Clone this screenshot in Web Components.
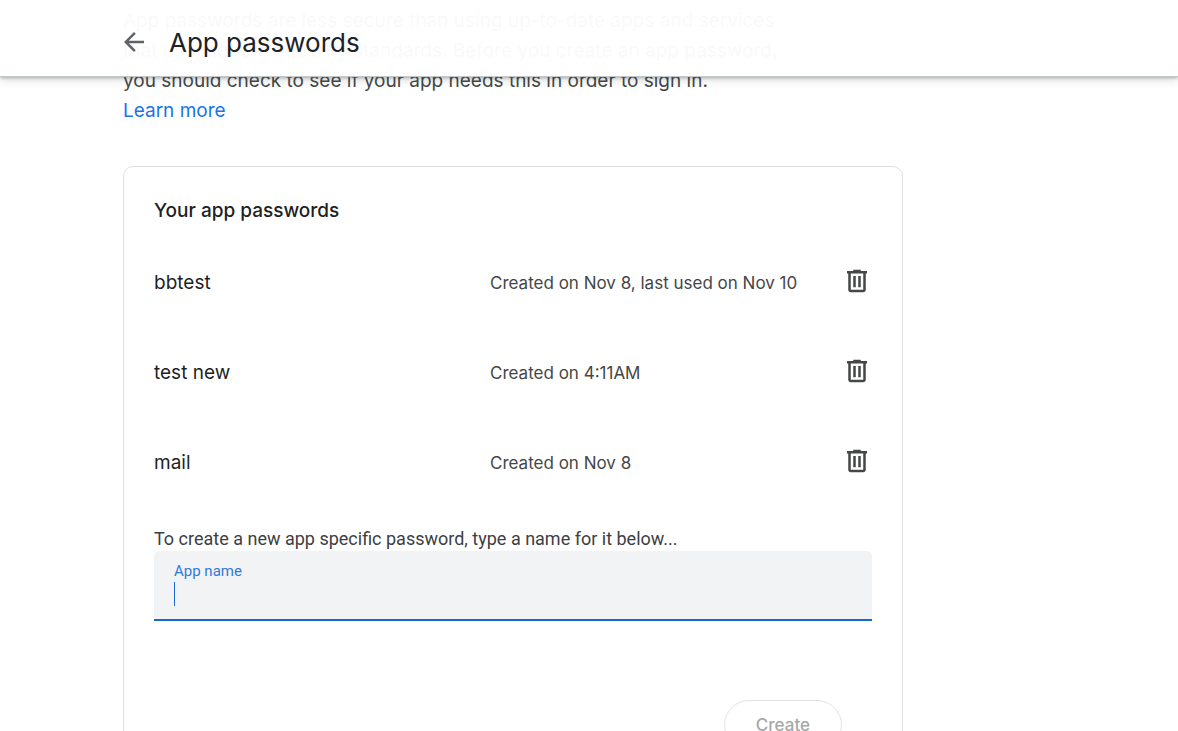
<!DOCTYPE html>
<html lang="en">
<head>
<meta charset="utf-8">
<meta name="viewport" content="width=device-width, initial-scale=1">
<title>App passwords</title>
<style>
html { scrollbar-width: none; }
body {
  margin: 0;
  background: #fff;
  color: #1f1f1f;
  font: 19px/30px "Google Sans Text", Inter, "Liberation Sans", sans-serif;
}
</style>
</head>
<body>
<app-passwords-page>
  <page-bar slot="bar">App passwords</page-bar>
  <intro-text>App passwords are less secure than using up-to-date apps and services<br>that use modern security standards. Before you create an app password,<br>you should check to see if your app needs this in order to sign in.<br></intro-text>
  <password-card>
    <span slot="heading">Your app passwords</span>
    <password-row>bbtest<span slot="meta">Created on Nov 8, last used on Nov 10</span></password-row>
    <password-row>test new<span slot="meta">Created on 4:11AM</span></password-row>
    <password-row>mail<span slot="meta">Created on Nov 8</span></password-row>
    <create-form slot="form"></create-form>
  </password-card>
</app-passwords-page>
<script>
const define = (name, html) => {
  const template = document.createElement('template');
  template.innerHTML = html;
  customElements.define(name, class extends HTMLElement {
    constructor() {
      super();
      this.attachShadow({ mode: 'open' }).append(template.content.cloneNode(true));
    }
  });
};

define('app-passwords-page', `
<style>
:host { display: block; }
main { box-sizing: border-box; max-width: 1026px; padding: 6px 123px 60px; }
@media (max-width: 800px) { main { padding-inline: 20px; } }
</style>
<slot name="bar"></slot>
<main><slot></slot></main>`);

define('page-bar', `
<style>
:host { display: block; position: sticky; top: 0; height: 0; z-index: 2; }
header {
  display: flex; align-items: center; gap: 20px; box-sizing: border-box;
  height: 77px; padding: 8px 119px 0; background: rgba(255,255,255,.97);
  border-bottom: 1px solid #c4c7c9;
  box-shadow: 0 1px 3px rgba(60,64,67,.35), 0 4px 8px rgba(60,64,67,.15);
}
button { display: flex; padding: 0; border: 0; background: none; color: #5f6368; }
svg { width: 30px; height: 30px; fill: currentColor; }
h1 { margin: 0; padding-top: 2px; font-size: 26px; line-height: 36px; font-weight: 400; color: #202124; }
@media (max-width: 800px) { header { padding-inline: 16px; } }
</style>
<header>
  <button type="button" aria-label="Back"><svg viewBox="0 0 24 24" aria-hidden="true"><path d="M20 11H7.83l5.59-5.59L12 4l-8 8 8 8 1.41-1.41L7.83 13H20v-2z"/></svg></button>
  <h1><slot></slot></h1>
</header>`);

define('intro-text', `
<style>
:host { display: block; color: #444746; }
p { margin: 0; }
a { color: #1a73e8; text-decoration: none; }
</style>
<p><slot></slot><a href="#">Learn more</a></p>`);

define('password-card', `
<style>
:host { display: block; margin-top: 40px; }
section { border: 1px solid #e0e0e0; border-radius: 10px; padding: 29px 30px 30px; }
h2 { margin: 0 0 11px; font-size: 19px; line-height: 30px; font-weight: 500; }
</style>
<section>
  <h2><slot name="heading"></slot></h2>
  <slot></slot>
  <slot name="form"></slot>
</section>`);

define('password-row', `
<style>
:host { display: grid; grid-template-columns: 336px 1fr 30px; align-items: center; height: 90px; }
.name, .meta { padding-top: 2px; }
.meta { font-size: 17px; color: #444746; }
button { display: flex; padding: 0 0 2px; border: 0; background: none; color: #444746; }
svg { width: 30px; height: 30px; fill: currentColor; }
@media (max-width: 800px) { :host { grid-template-columns: 1fr 1fr 30px; } }
</style>
<div class="name"><slot></slot></div>
<div class="meta"><slot name="meta"></slot></div>
<button type="button" aria-label="Delete app password"><svg viewBox="0 0 24 24" aria-hidden="true"><path d="M15 4V3H9v1H4v2h1v13c0 1.1.9 2 2 2h10c1.1 0 2-.9 2-2V6h1V4h-5zm2 15H7V6h10v13zM9 8h2v9H9zm4 0h2v9h-2z"/></svg></button>`);

define('create-form', `
<style>
:host { display: block; padding-top: 20px; font-family: Roboto, "Liberation Sans", sans-serif; }
p { margin: 0; font-size: 18px; line-height: 24px; color: #3c4043; }
.field {
  position: relative; display: flex; flex-direction: column; box-sizing: border-box;
  height: 70px; padding: 10px 20px 12px; background: #f1f3f4;
  border-bottom: 2px solid #1967d2; border-radius: 5px 5px 0 0;
}
label { font-size: 15px; line-height: 20px; color: #3179da; }
input {
  width: 100%; height: 26px; padding: 0; border: 0; outline: 0; background: none;
  font: 20px/26px Roboto, sans-serif; color: #202124; caret-color: transparent;
}
.caret { position: absolute; left: 20px; top: 31px; width: 1px; height: 24px; background: #1967d2; }
.actions { display: flex; justify-content: flex-end; padding: 79px 30px 0 0; }
.create {
  height: 50px; padding: 0 31px; border: 1px solid #e3e3e3; border-radius: 25px;
  background: #fff; color: #a8a8a8; font: 500 17px/24px "Google Sans Text", Inter, sans-serif;
}
</style>
<form>
  <p>To create a new app specific password, type a name for it below...</p>
  <div class="field">
    <label for="app-name">App name</label>
    <input id="app-name" type="text" autocomplete="off">
    <span class="caret"></span>
  </div>
  <div class="actions"><button class="create" type="submit" disabled>Create</button></div>
</form>`);
</script>
</body>
</html>
